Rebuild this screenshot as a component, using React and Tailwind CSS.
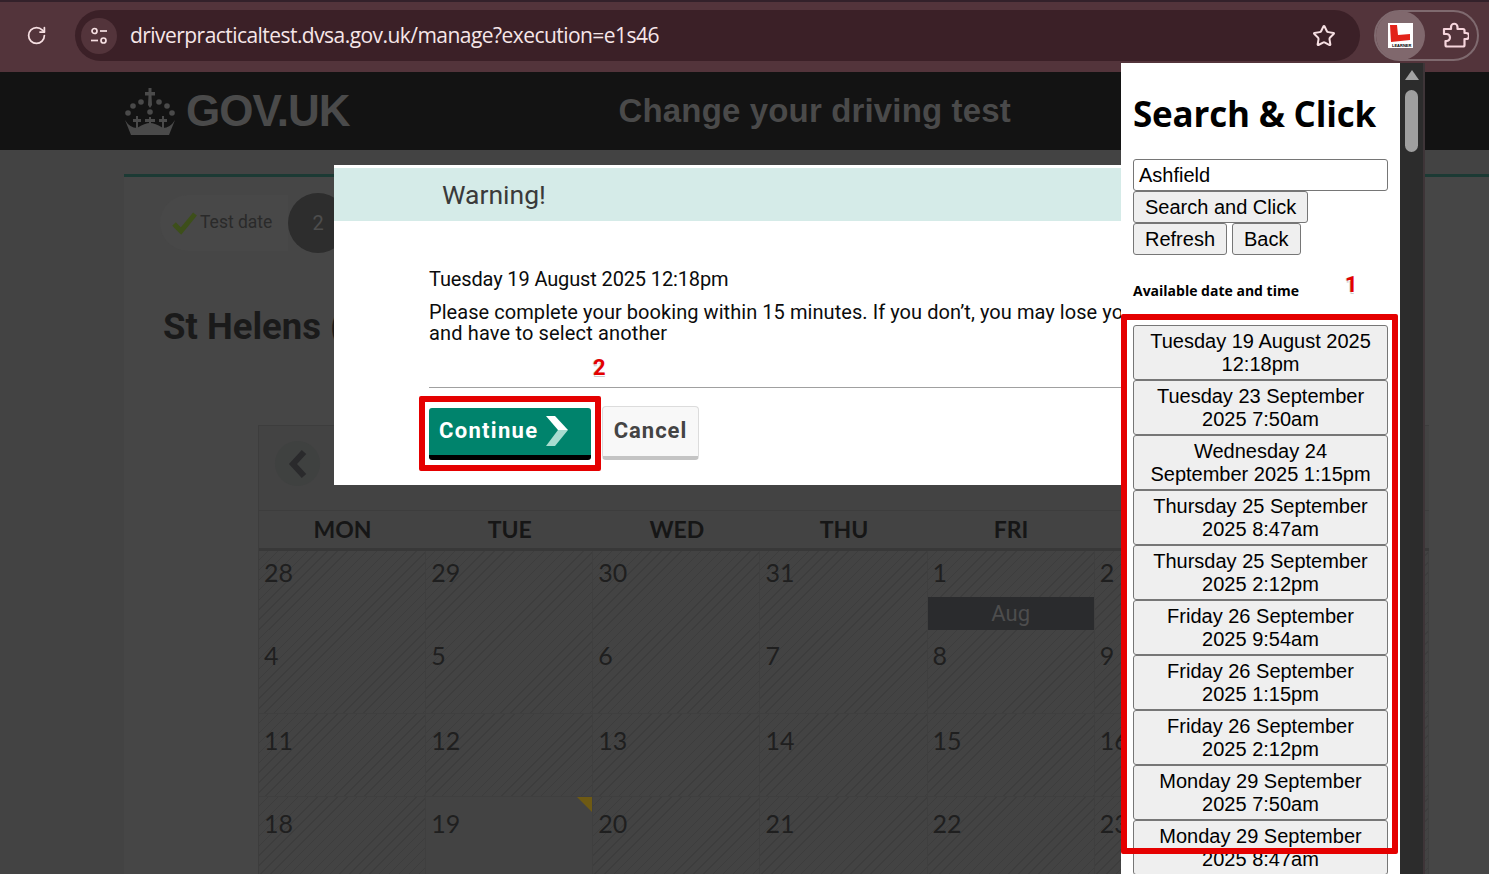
import React from 'react';
import { RotateCw, Star } from 'lucide-react';

const days = ['MON', 'TUE', 'WED', 'THU', 'FRI', 'SAT', 'SUN'];
const weeks = [
    { height: 'h-[79px]', pad: 'pt-[5px]', cells: [28, 29, 30, 31, 1, 2, 3] },
    { height: 'h-[84px]', pad: 'pt-[9px]', cells: [4, 5, 6, 7, 8, 9, 10] },
    { height: 'h-[83px]', pad: 'pt-[10px]', cells: [11, 12, 13, 14, 15, 16, 17] },
    { height: 'h-[83px]', pad: 'pt-[10px]', cells: [18, 19, 20, 21, 22, 23, 24] },
];
const slots = [
    'Tuesday 19 August 2025 12:18pm',
    'Tuesday 23 September 2025 7:50am',
    'Wednesday 24 September 2025 1:15pm',
    'Thursday 25 September 2025 8:47am',
    'Thursday 25 September 2025 2:12pm',
    'Friday 26 September 2025 9:54am',
    'Friday 26 September 2025 1:15pm',
    'Friday 26 September 2025 2:12pm',
    'Monday 29 September 2025 7:50am',
    'Monday 29 September 2025 8:47am',
];

const hatch = 'bg-[repeating-linear-gradient(135deg,#434343_0,#434343_6px,#3d3d3d_6px,#3d3d3d_7px)]';
const popupButton = 'h-8 border border-[#767676] rounded-[3px] bg-[#efefef] px-[11px] text-[20px] text-black font-["Liberation_Sans",sans-serif]';

const Crown = () => (
    <svg width="50" height="50" viewBox="0 0 50 50" fill="#4a4a4a">
        <path d="M23.5 2 H26.5 V6 H30 V9.5 H26.5 L27 19 L25 22 L23 19 L23.5 9.5 H20 V6 H23.5 Z" />
        <circle cx="16" cy="16" r="2.8" />
        <circle cx="34" cy="16" r="2.8" />
        <circle cx="8" cy="20" r="2.8" />
        <circle cx="42" cy="20" r="2.8" />
        <circle cx="3" cy="27" r="2.8" />
        <circle cx="47" cy="27" r="2.8" />
        <circle cx="25" cy="26" r="2.8" />
        <path d="M11 30 H13 V33 H16 V36 H13 V42 H11 V36 H8 V33 H11 Z" />
        <path d="M24 31 H26 V33 H30 V36 H26 V41 H24 V36 H20 V33 H24 Z" />
        <path d="M37 30 H39 V33 H42 V36 H39 V42 H37 V36 H34 V33 H37 Z" />
        <path d="M0 34 Q5 42 12 42 Q20 37 25 37 Q30 37 38 42 Q45 42 50 34 L44 49 L6 49 Z" />
    </svg>
);

const BrowserBar = () => (
    <div className="h-[72px] shrink-0 bg-[#53343b] border-t-2 border-[#33212a] flex items-center">
        <div className="w-[75px] flex justify-center -mt-[3px]">
            <RotateCw size={21} strokeWidth={2} className="text-[#f6dfe2] -ml-[3px]" />
        </div>
        <div className="w-[1285px] h-[51px] -mt-[3px] rounded-full bg-[#3b2027] flex items-center pl-[6px] pr-6">
            <div className="w-[36px] h-[36px] rounded-full bg-[#53343b] flex items-center justify-center">
                <svg width="20" height="20" viewBox="0 0 20 20" fill="none" stroke="#f6dfe2" strokeWidth="1.7">
                    <circle cx="5.5" cy="5" r="2.5" />
                    <path d="M11 5 H18" />
                    <path d="M2 14.5 H9" />
                    <circle cx="14.5" cy="14.5" r="2.5" />
                </svg>
            </div>
            <span className="ml-[13px] text-[21px] text-[#f6e6e8] font-['Open_Sans',sans-serif] tracking-[-0.55px]">
                driverpracticaltest.dvsa.gov.uk/manage?execution=e1s46
            </span>
            <Star size={24} strokeWidth={2} className="ml-auto text-[#f6dfe2]" />
        </div>
        <div className="ml-[14px] w-[105px] h-[51px] -mt-[3px] rounded-full border-2 border-[#7f6a6f] flex items-center">
            <div className="w-[49px] h-[49px] rounded-full bg-[#80686d] flex items-center justify-center">
                <div className="relative w-[25px] h-[25px] bg-white">
                    <svg width="25" height="25" viewBox="0 0 25 25" fill="#e2231a">
                        <path d="M2 2 H9 L10 12 L22 11 V17 L3 19 Z" />
                    </svg>
                    <span className="absolute left-[4px] bottom-0 text-[4px] leading-[5px] font-bold text-black font-['Liberation_Sans',sans-serif]">LEARNER</span>
                </div>
            </div>
            <svg className="ml-[16px]" width="28" height="28" viewBox="0 0 28 28" fill="none" stroke="#f6d5dc" strokeWidth="2.2" strokeLinejoin="round">
                <path d="M3 7 H10 V5 A3.2 3.2 0 0 1 16.5 5 V7 H22 A1.5 1.5 0 0 1 23.5 8.5 V11 H25 A3 3 0 0 1 25 17 H23.5 V23 A1.5 1.5 0 0 1 22 24.5 H6 A1.5 1.5 0 0 1 4.5 23 V19 H5.5 A3.5 3.5 0 0 0 5.5 12 H3 Z" />
            </svg>
        </div>
    </div>
);

const GovHeader = () => (
    <div className="h-[78px] shrink-0 bg-[#131313] flex items-center pl-[125px] font-['Liberation_Sans',sans-serif] font-bold text-[#4a4a4a]">
        <Crown />
        <span className="ml-[11px] text-[44px] tracking-[-1px]">GOV.UK</span>
        <span className="ml-[269px] text-[33px] tracking-[0.15px]">Change your driving test</span>
    </div>
);

const Calendar = () => (
    <div className="ml-[134px] mr-[60px] mt-[76px] border-l border-[#3d3d3d] bg-[#434343]">
        <div className="h-[85px] border-t border-[#3d3d3d] pl-[16px] pt-[15px]">
            <div className="w-[45px] h-[45px] rounded-full bg-[#3f4140] flex items-center justify-center">
                <svg width="20" height="30" viewBox="0 0 20 30" fill="none" stroke="#2a2a2c" strokeWidth="6">
                    <path d="M16 3 L5 15 L16 27" />
                </svg>
            </div>
        </div>
        <div className="grid grid-cols-7 h-[41px] border-t border-[#3d3d3d] border-b-[3px] border-b-[#383838]">
            {days.map((day) => (
                <div key={day} className="flex items-center justify-center text-[23px] font-bold text-[#161616] font-['Lato',sans-serif]">
                    {day}
                </div>
            ))}
        </div>
        {weeks.map((week) => (
            <div key={week.cells[0]} className={`grid grid-cols-7 ${week.height}`}>
                {week.cells.map((n) => {
                    const open = n === 19;
                    return (
                        <div key={n} className={`relative border-r border-b border-[#3f3f3f] pl-[5px] text-[25px] leading-[32px] text-[#1f1f1f] font-['Lato',sans-serif] ${week.pad} ${open ? 'bg-[#434343]' : hatch}`}>
                            {n}
                            {open && <div className="absolute top-0 right-0 w-0 h-0 border-l-[15px] border-l-transparent border-t-[15px] border-t-[#6e5a14]" />}
                            {n === 1 && (
                                <div className="mt-[9px] -ml-[5px] h-[33px] bg-[#2a2b2d] flex items-center justify-center text-[22px] text-[#4d4d4d] font-['Roboto',sans-serif]">
                                    Aug
                                </div>
                            )}
                        </div>
                    );
                })}
            </div>
        ))}
    </div>
);

const PageBehind = () => (
    <div className="flex-1 bg-[#434343] pl-[124px]">
        <div className="mt-[24px] h-full bg-[#464646]">
            <div className="h-[3px] bg-[#1c3a34]" />
            <div className="mt-[16px] h-[60px] flex items-center pl-[36px]">
                <div className="w-[128px] h-[56px] rounded-l-full bg-[#484848] flex items-center pl-[12px]">
                    <svg width="26" height="24" viewBox="0 0 26 24" fill="none" stroke="#3d4f1a" strokeWidth="5">
                        <path d="M2 13 L9 20 L23 3" />
                    </svg>
                    <span className="ml-[2px] -mt-[2px] text-[17.5px] text-[#2a2a2a] font-['Roboto',sans-serif]">Test date</span>
                </div>
                <div className="w-[60px] h-[60px] rounded-full bg-[#2d2d2d] flex items-center justify-center text-[20px] text-[#4d4d4d] font-['Roboto',sans-serif]">2</div>
            </div>
            <h1 className="mt-[52px] ml-[39px] text-[36.5px] leading-[44px] font-bold text-[#1a1a1a] font-['Roboto',sans-serif]">St Helens (Sutton)</h1>
            <Calendar />
        </div>
    </div>
);

const WarningModal = () => (
    <div className="absolute left-[334px] top-[165px] w-[800px] h-[320px] bg-white pt-[3px] text-[#0b0c0c] font-['Roboto',sans-serif]">
        <div className="h-[53px] bg-[#d5ebe8] pl-[108px] flex items-center text-[26.5px] text-[#3a3a3a]">Warning!</div>
        <div className="pl-[95px] pt-[45px]">
            <p className="text-[20px] leading-[26px] tracking-[-0.13px]">Tuesday 19 August 2025 12:18pm</p>
            <p className="mt-[10px] text-[20px] leading-[21px] whitespace-nowrap tracking-[0.06px]">
                Please complete your booking within 15 minutes. If you don’t, you may lose your slot
                <br />
                <span className="tracking-[0.15px]">and have to select another</span>
            </p>
            <div className="mt-[43px] h-px bg-[#a0a0a0]" />
            <div className="mt-[20px] flex items-start">
                <button className="w-[162px] h-[52px] rounded-[3px] bg-[#00836c] border-b-[5px] border-black flex items-center pl-[10px] pb-[2px] text-[22px] font-bold tracking-[1.3px] text-white">
                    Continue
                    <svg className="ml-[7px]" width="24" height="32" viewBox="0 0 24 32">
                        <path d="M1 1 H10 L23 15 H13 Z" fill="#ffffff" />
                        <path d="M13 15 H23 L10 31 H1 Z" fill="#a8dcd0" />
                    </svg>
                </button>
                <button className="ml-[11px] -mt-[2px] w-[97px] h-[54px] rounded-[4px] border border-[#dcdcdc] border-b-[4px] border-b-[#c4c4c4] bg-[#f8f8f8] pb-[2px] text-[22px] font-bold tracking-[1px] text-[#444444]">
                    Cancel
                </button>
            </div>
        </div>
    </div>
);

const ExtensionPopup = () => (
    <div className="absolute left-[1121px] top-[63px] w-[304px] h-[811px] flex overflow-hidden">
        <div className="w-[279px] bg-white pl-[12px] pr-[12px] pt-[27px] text-black">
            <h2 className="text-[35px] leading-[48px] font-bold whitespace-nowrap font-['Open_Sans',sans-serif] tracking-[-0.2px]">Search &amp; Click</h2>
            <div className="mt-[21px] h-8 border border-[#767676] rounded-[3px] pl-[5px] flex items-center text-[20px] font-['Liberation_Sans',sans-serif]">Ashfield</div>
            <button className={popupButton}>Search and Click</button>
            <div className="flex gap-[5px]">
                <button className={popupButton}>Refresh</button>
                <button className={popupButton}>Back</button>
            </div>
            <p className="mt-[26px] text-[14px] leading-[20px] font-bold whitespace-nowrap font-['Open_Sans',sans-serif]">Available date and time</p>
            <div className="mt-[24px]">
                {slots.map((slot) => (
                    <button key={slot} className="block w-full h-[55px] border border-[#767676] rounded-[3px] bg-[#efefef] px-[11px] text-[20px] leading-[23px] text-center font-['Liberation_Sans',sans-serif]">
                        {slot}
                    </button>
                ))}
            </div>
        </div>
        <div className="w-[25px] bg-[#2c2c2c] border-r-2 border-[#3e3538] flex flex-col items-center pt-[7px]">
            <div className="w-0 h-0 border-x-[7px] border-x-transparent border-b-[10px] border-b-[#a3a3a3]" />
            <div className="mt-[10px] w-[13px] h-[62px] rounded-full bg-[#9f9f9f]" />
        </div>
    </div>
);

const Marker = ({ className, children }) => (
    <span className={`absolute text-[22px] leading-[24px] font-bold text-[#e50000] font-['Roboto',sans-serif] [text-shadow:1px_1px_0_#ffffff,-1px_0_0_#cccccc,0_2px_0_#cccccc] ${className}`}>
        {children}
    </span>
);

const App = () => (
    <div className="relative w-[1489px] h-[874px] overflow-hidden flex flex-col bg-[#434343]">
        <BrowserBar />
        <GovHeader />
        <PageBehind />
        <WarningModal />
        <ExtensionPopup />

        {/* red annotations on top of the screenshot */}
        <div className="absolute left-[419px] top-[396px] w-[182px] h-[75px] border-[6px] border-[#e50000] rounded-[2px]" />
        <div className="absolute left-[1121px] top-[314px] w-[277px] h-[540px] border-[6px] border-[#e50000] rounded-[2px]" />
        <Marker className="left-[1345px] top-[273px]">1</Marker>
        <Marker className="left-[593px] top-[356px]">2</Marker>
    </div>
);

export default App;
